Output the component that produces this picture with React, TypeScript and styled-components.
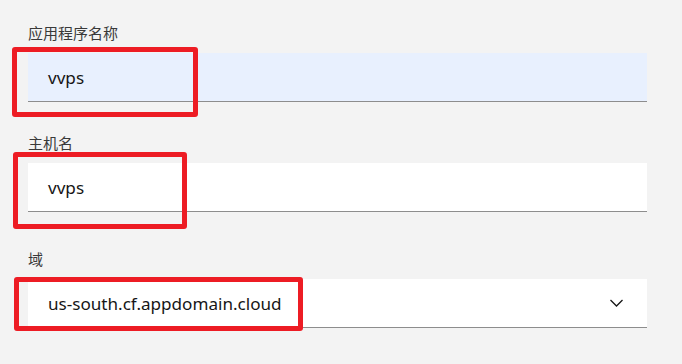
import React from 'react';
import styled, { createGlobalStyle } from 'styled-components';

const GlobalStyle = createGlobalStyle`
  body {
    margin: 0;
    background: #f3f3f3;
    font-family: "Noto Sans", "Noto Sans CJK SC", sans-serif;
  }
`;

const Form = styled.div`
  width: 682px;
  height: 364px;
  box-sizing: border-box;
  padding: 24px 35px 0 28px;
  display: flex;
  flex-direction: column;
`;

const Field = styled.div<{ $gap: number }>`
  position: relative;
  display: flex;
  flex-direction: column;
  margin-bottom: ${(p) => p.$gap}px;
`;

const Label = styled.label`
  font-size: 15px;
  line-height: 19px;
  color: #393939;
  margin-bottom: 10px;
`;

const InputBox = styled.div<{ $autofill?: boolean }>`
  height: 48px;
  display: flex;
  align-items: center;
  justify-content: space-between;
  padding: 0 24px 0 20px;
  background: ${(p) => (p.$autofill ? '#e8f0fe' : '#ffffff')};
  border-bottom: 1px solid #8d8d8d;
  font-size: 17.1px;
  color: #161616;
`;

const Highlight = styled.div<{ $left: number; $top: number; $width: number; $height: number }>`
  position: absolute;
  left: ${(p) => p.$left}px;
  top: ${(p) => p.$top}px;
  width: ${(p) => p.$width}px;
  height: ${(p) => p.$height}px;
  box-sizing: border-box;
  border: 5px solid #ed1c24;
  border-radius: 3px;
  pointer-events: none;
`;

const Chevron = () => (
  <svg width="13" height="8" viewBox="0 0 13 8" fill="none">
    <path d="M0.5 1l6 6 6-6" stroke="#161616" strokeWidth="1.3" />
  </svg>
);

const fields = [
  { label: '应用程序名称', value: 'vvps', autofill: true, gap: 32, box: [-16, 23, 186, 70] },
  { label: '主机名', value: 'vvps', gap: 38, box: [-15, 18, 174, 77] },
  { label: '域', value: 'us-south.cf.appdomain.cloud', select: true, gap: 0, box: [-14, 27, 289, 54] },
];

const App = () => (
  <>
    <GlobalStyle />
    <Form>
      {fields.map((f) => (
        <Field key={f.label} $gap={f.gap}>
          <Label>{f.label}</Label>
          <InputBox $autofill={f.autofill}>
            <span>{f.value}</span>
            {f.select && <Chevron />}
          </InputBox>
          <Highlight $left={f.box[0]} $top={f.box[1]} $width={f.box[2]} $height={f.box[3]} />
        </Field>
      ))}
    </Form>
  </>
);

export default App;
